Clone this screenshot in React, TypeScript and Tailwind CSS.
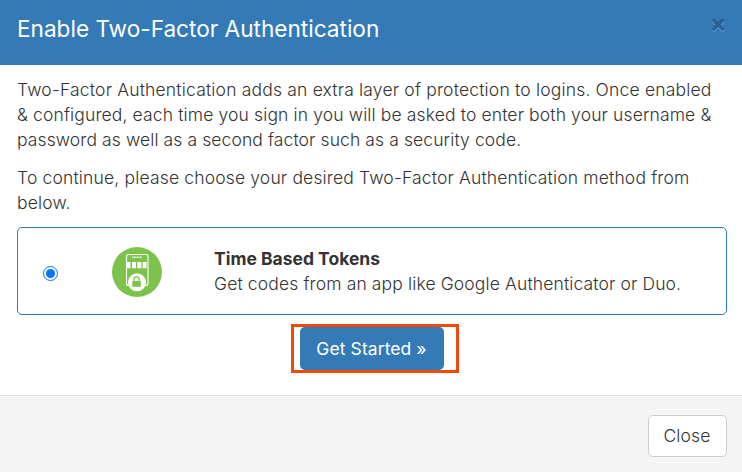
function TokenIcon() {
  return (
    <svg width="50" height="50" viewBox="0 0 50 50" fill="none">
      <circle cx="25" cy="25" r="25" fill="#7dc24b" />
      <rect x="14.5" y="7.5" width="21.5" height="31" rx="2" stroke="#fff" strokeWidth="1.1" />
      <path d="M20.5 10.2h9" stroke="#fff" strokeWidth="1" strokeLinecap="round" />
      <path d="M14.5 15h4v6.3h-4zM20 15h4v6.3h-4zM25.3 15h4v6.3h-4zM30.6 15h4v6.3h-4z" fill="#fff" />
      <circle cx="25" cy="35.3" r="9" fill="#fff" />
      <path d="M22 34.5v-2a2.6 2.6 0 0 1 5.2 0v2" stroke="#7dc24b" strokeWidth="1.2" />
      <rect x="20.3" y="34" width="8.5" height="5.8" rx="0.4" fill="#7dc24b" />
    </svg>
  );
}

export default function App() {
  return (
    <div className="flex h-[472px] w-[742px] flex-col overflow-hidden bg-white font-['Inter',sans-serif] text-[17.5px] leading-[25px] font-light tracking-[0.13px] text-[#333333]">
      <div className="flex h-[65px] shrink-0 items-start justify-between bg-[#337ab7] pr-[15px] pl-[17px]">
        <h4 className="mt-[16px] text-[22.6px] leading-[26px] font-normal tracking-normal text-white">
          Enable Two-Factor Authentication
        </h4>
        <button className="mt-[11px] text-[26px] leading-[26px] font-bold tracking-normal text-[#296292] [text-shadow:0_1px_0_#6aa1d0]">
          ×
        </button>
      </div>
      <div className="flex h-[330px] shrink-0 flex-col px-[17px] pt-[12px]">
        <p className="whitespace-nowrap">
          <span className="tracking-[0.18px]">
            Two-Factor Authentication adds an extra layer of protection to logins. Once enabled
          </span>
          <br />
          &amp; configured, each time you sign in you will be asked to enter both your username &amp;
          <br />
          <span className="tracking-[0.1px]">password as well as a second factor such as a security code.</span>
        </p>
        <p className="mt-[13px] tracking-[0.16px] whitespace-nowrap">
          To continue, please choose your desired Two-Factor Authentication method from
          <br />
          below.
        </p>
        <label className="mt-[12px] flex h-[88px] w-[710px] shrink-0 items-center rounded-[5px] border border-[#337ab7] pl-[25px]">
          <input type="radio" name="module" defaultChecked className="mt-[4px] size-[15px] accent-[#0075ff]" />
          <span className="mt-[2px] ml-[54px]">
            <TokenIcon />
          </span>
          <span className="ml-[52px]">
            <span className="block font-bold tracking-normal">Time Based Tokens</span>
            Get codes from an app like Google Authenticator or Duo.
          </span>
        </label>
        <div className="mt-[9px] ml-[274px] flex h-[49px] w-[168px] items-center border-[3px] border-[#f04a0a] pl-[6px]">
          <button className="h-[43px] w-[144px] rounded-[5px] bg-[#337ab7] pr-[1px] font-normal tracking-[0.08px] text-white">
            Get Started »
          </button>
        </div>
      </div>
      <div className="flex flex-1 items-start justify-end border-t border-[#e0e0e0] bg-[#f4f4f4] pt-[19px] pr-[15px]">
        <button className="h-[42px] w-[79px] rounded-[5px] border border-[#cccccc] bg-white pr-[1px] pb-[2px]">
          Close
        </button>
      </div>
    </div>
  );
}
